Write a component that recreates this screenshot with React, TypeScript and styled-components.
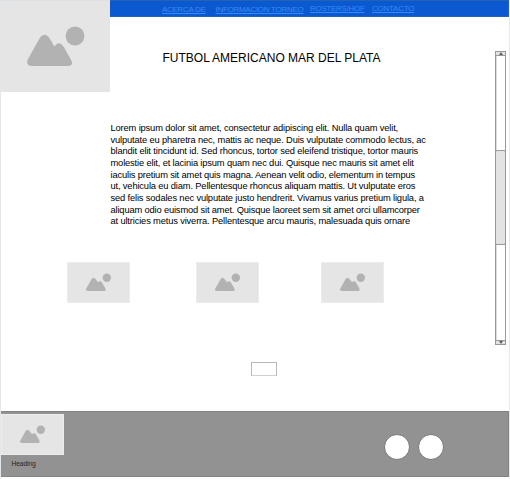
import React from "react";
import styled, { createGlobalStyle } from "styled-components";

const GlobalStyle = createGlobalStyle`
  * { box-sizing: border-box; }
  body { margin: 0; background: #fff; font-family: "Liberation Sans", Arial, sans-serif; color: #000; }
`;

const Page = styled.div`
  width: 510px;
  height: 479px;
  display: grid;
  grid-template-columns: 109px 385px 12px 2px;
  grid-template-rows: 17px 75px 319px 66px;
  border-left: 1px solid #e2e7eb;
  border-right: 1px solid #e4e9ed;
  overflow: hidden;
`;

const HeroImage = styled.div`
  grid-column: 1;
  grid-row: 1 / 3;
  border-top: 1px solid #dce0e2;
  display: flex;
`;

const Nav = styled.nav`
  grid-column: 2 / 5;
  grid-row: 1;
  display: flex;
  align-items: flex-start;
  padding-left: 52px;
  background: #0b59d1;
  border: 1px solid #2562b3;
  border-width: 1px 1px 1px 0;
`;

const NavLink = styled.a<{ $width: number; $gap: number; $drop: number; $spacing: number }>`
  flex: none;
  width: ${(p) => p.$width}px;
  margin-right: ${(p) => p.$gap}px;
  margin-top: ${(p) => p.$drop}px;
  font-size: 8px;
  line-height: 9px;
  letter-spacing: ${(p) => p.$spacing}px;
  white-space: nowrap;
  color: #358af5;
  text-decoration: underline;
`;

const Title = styled.h1`
  grid-column: 2;
  grid-row: 2;
  margin: 33px 0 0 52.5px;
  font-size: 12px;
  line-height: 16px;
  font-weight: 400;
  white-space: nowrap;
`;

const Content = styled.main`
  grid-column: 1 / 3;
  grid-row: 3;
  display: flex;
  flex-direction: column;
`;

const Paragraph = styled.p`
  margin: 31px 0 0 109.5px;
  font-size: 9.33px;
  line-height: 11.67px;
`;

const Line = styled.span<{ $spacing: number }>`
  display: block;
  white-space: nowrap;
  letter-spacing: ${(p) => p.$spacing}px;
`;

const Gallery = styled.div`
  display: grid;
  grid-template-columns: 63px 63px 63px;
  column-gap: 66px;
  margin: 34px 0 0 66px;
  height: 41px;

  & > :last-child { margin-left: -4px; margin-right: 4px; }
`;

const Thumb = styled.div`
  height: 41px;
  border: 1px solid #ececec;
  display: flex;
`;

const Field = styled.div`
  width: 26px;
  height: 14px;
  margin: 59px 0 0 250px;
  background: #fff;
  border: 1px solid #b7b7b7;
  border-bottom-color: #d0d0d0;
`;

const Scrollbar = styled.div`
  grid-column: 3;
  grid-row: 2 / 4;
  width: 11px;
  height: 294px;
  margin-top: 34px;
  background: #fff;
  border: 1px solid #999;
  box-shadow: inset 1px 0 #dedede;
  display: flex;
  flex-direction: column;
`;

const Arrow = styled.div<{ $down?: boolean }>`
  height: 4px;
  display: flex;
  align-items: center;
  justify-content: center;
  background: #e3e3e3;
  border-${(p) => (p.$down ? "top" : "bottom")}: 1px solid #999;

  &::before {
    content: "";
    border: 2px solid transparent;
    border-${(p) => (p.$down ? "top" : "bottom")}: 3px solid #606060;
    border-${(p) => (p.$down ? "bottom" : "top")}: 0;
  }
`;

const Track = styled.div`
  flex: 1;
  padding-top: 94px;
`;

const Handle = styled.div`
  height: 95px;
  margin: 0 -1px;
  background: #e3e3e3;
  border: 1px solid #999;
  border-radius: 2px;
`;

const Footer = styled.footer`
  grid-column: 1 / 5;
  grid-row: 4;
  display: flex;
  background: #929292;
  border: 1px solid #838383;
  border-left: 0;
`;

const Brand = styled.div`
  width: 63px;
  padding-top: 2px;
`;

const Caption = styled.div`
  margin: 4px 0 0 10.5px;
  font-size: 6.7px;
  line-height: 9px;
  letter-spacing: -0.12px;
  color: #252525;
`;

const Socials = styled.div`
  display: flex;
  gap: 8px;
  margin: 22px 0 0 320px;
`;

const Social = styled.div`
  width: 26px;
  height: 26px;
  border-radius: 50%;
  background: #fff;
  border: 1px solid #777;
`;

const Drawing = styled.svg`
  display: block;
  width: 100%;
  height: 100%;
  background: #e5e5e5;
`;

function Placeholder({ box, large }: { box: string; large?: boolean }) {
  return (
    <Drawing viewBox={box} preserveAspectRatio="none">
      {large ? (
        <g fill="#b2b2b2">
          <circle cx="74" cy="35" r="9.4" />
          <path d="M26.6 58.7 L38.5 37.5 Q43.5 30 48.7 37.5 L53.4 45.4 Q58 39.2 62.3 45.3 L70.2 59 Q73 65 66.5 65 H32 Q24.5 65 26.6 58.7Z" />
        </g>
      ) : (
        <g fill="#b2b2b2">
          <circle cx="38.8" cy="14.7" r="4.2" />
          <path d="M18.3 25.5 L23.5 16.3 Q25.5 13 27.7 16.3 L30 19.3 Q32 17.2 33.8 19.3 L37.3 25.2 Q38.4 28 35.8 28 H20.6 Q17.2 28.2 18.3 25.5Z" />
        </g>
      )}
    </Drawing>
  );
}

const links = [
  { label: "ACERCA DE", width: 43, gap: 10.5, drop: 4, spacing: -0.3 },
  { label: "INFORMACION TORNEO", width: 87.5, gap: 7, drop: 4, spacing: -0.28 },
  { label: "ROSTERS/HOF", width: 54, gap: 8, drop: 3, spacing: -0.3 },
  { label: "CONTACTO", width: 42, gap: 0, drop: 3, spacing: -0.25 },
];

const lines: [string, number][] = [
  ["Lorem ipsum dolor sit amet, consectetur adipiscing elit. Nulla quam velit,", -0.15],
  ["vulputate eu pharetra nec, mattis ac neque. Duis vulputate commodo lectus, ac", -0.147],
  ["blandit elit tincidunt id. Sed rhoncus, tortor sed eleifend tristique, tortor mauris", -0.14],
  ["molestie elit, et lacinia ipsum quam nec dui. Quisque nec mauris sit amet elit", -0.153],
  ["iaculis pretium sit amet quis magna. Aenean velit odio, elementum in tempus", -0.157],
  ["ut, vehicula eu diam. Pellentesque rhoncus aliquam mattis. Ut vulputate eros", -0.152],
  ["sed felis sodales nec vulputate justo hendrerit. Vivamus varius pretium ligula, a", -0.15],
  ["aliquam odio euismod sit amet. Quisque laoreet sem sit amet orci ullamcorper", -0.16],
  ["at ultricies metus viverra. Pellentesque arcu mauris, malesuada quis ornare", -0.153],
];

export default function App() {
  return (
    <>
      <GlobalStyle />
      <Page>
        <HeroImage><Placeholder box="0 0 109 91" large /></HeroImage>
        <Nav>
          {links.map((l) => (
            <NavLink key={l.label} $width={l.width} $gap={l.gap} $drop={l.drop} $spacing={l.spacing}>
              {l.label}
            </NavLink>
          ))}
        </Nav>
        <Title>FUTBOL AMERICANO MAR DEL PLATA</Title>
        <Content>
          <Paragraph>
            {lines.map(([text, spacing]) => (
              <Line key={text} $spacing={spacing}>{text}</Line>
            ))}
          </Paragraph>
          <Gallery>
            <Thumb><Placeholder box="0 0 61 39" /></Thumb>
            <Thumb><Placeholder box="0 0 61 39" /></Thumb>
            <Thumb><Placeholder box="0 0 61 39" /></Thumb>
          </Gallery>
          <Field />
        </Content>
        <Scrollbar>
          <Arrow />
          <Track><Handle /></Track>
          <Arrow $down />
        </Scrollbar>
        <Footer>
          <Brand>
            <Thumb><Placeholder box="0 0 61 39" /></Thumb>
            <Caption>Heading</Caption>
          </Brand>
          <Socials><Social /><Social /></Socials>
        </Footer>
      </Page>
    </>
  );
}
